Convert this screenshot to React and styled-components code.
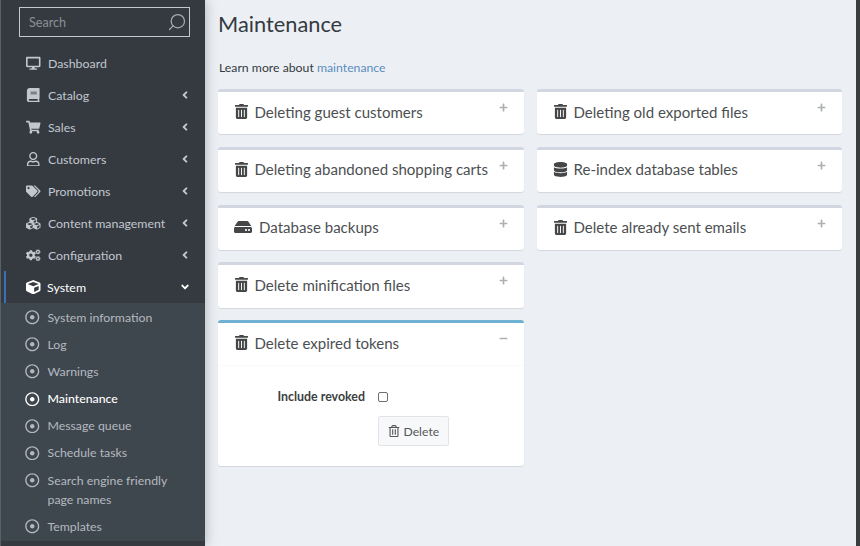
import React from 'react';
import styled, { createGlobalStyle } from 'styled-components';
import {
  FaDesktop, FaBook, FaShoppingCart, FaRegUser, FaTags, FaCubes, FaCogs, FaCube,
  FaRegDotCircle, FaTrashAlt, FaRegTrashAlt, FaDatabase, FaHdd, FaPlus, FaMinus,
  FaAngleLeft, FaAngleDown,
} from 'react-icons/fa';
import { Search } from 'lucide-react';

const GlobalStyle = createGlobalStyle`
  html, body {
    margin: 0;
    padding: 0;
    background: #ecf0f5;
  }
  * {
    box-sizing: border-box;
  }
`;

const Page = styled.div`
  display: flex;
  width: 860px;
  height: 546px;
  overflow: hidden;
  background: #ecf0f5;
  font-family: 'Lato', sans-serif;
  border-left: 1px solid #59606a;
  border-right: 4px solid #3a3d3b;
`;

const Sidebar = styled.aside`
  flex: 0 0 204px;
  height: 546px;
  overflow: hidden;
  background: #343a40;
  box-shadow: 0 0 12px rgba(0, 0, 0, 0.28);
  padding-top: 7px;
  position: relative;
  z-index: 1;
`;

const SearchBox = styled.div`
  display: flex;
  align-items: center;
  justify-content: space-between;
  height: 30px;
  margin: 0 15px 10px 18px;
  padding: 0 2px 0 9px;
  border: 1px solid #c4c9ce;
  font-size: 12.6px;
  color: #8b9197;

  svg {
    transform: scaleX(-1);
    color: #a7acb1;
  }
`;

const NavItem = styled.div`
  display: flex;
  align-items: center;
  height: 32px;
  padding: 0 14px 0 ${(p) => (p.$active ? '19px' : '24px')};
  font-size: 12.35px;
  color: ${(p) => (p.$active ? '#fff' : '#c2c7d0')};
  border-left: ${(p) => (p.$active ? '2px solid #3d6fb6' : 'none')};
  margin-left: ${(p) => (p.$active ? '3px' : '0')};
`;

const NavIcon = styled.span`
  display: flex;
  justify-content: center;
  align-items: center;
  width: 17px;
  margin-right: ${(p) => (p.$active ? '5px' : '6px')};
  font-size: 14.5px;
  flex: none;
`;

const NavLabel = styled.span`
  flex: 1;
  white-space: nowrap;
`;

const Arrow = styled.span`
  display: flex;
  font-size: 12px;
  margin-bottom: 1px;
`;

const SubNav = styled.div`
  background: #3f474e;
  padding-top: 1px;
  height: 238px;
`;

const SubItem = styled.div`
  display: flex;
  align-items: flex-start;
  padding: 3.5px 30px 3.5px 24px;
  font-size: 12.3px;
  line-height: 19px;
  height: ${(p) => (p.$tall ? '46px' : '27.2px')};
  color: ${(p) => (p.$active ? '#fff' : '#b4b9c0')};
  font-weight: ${(p) => (p.$active ? 500 : 400)};

  svg {
    flex: none;
    margin: 2.5px 8px 0 0;
    font-size: 14.5px;
  }
`;

const Main = styled.main`
  flex: 1;
  min-width: 0;
  padding: 10px 0 0 13px;
`;

const PageTitle = styled.h1`
  margin: 0;
  font-size: 21.8px;
  line-height: 28px;
  font-weight: 400;
  color: #343a40;
`;

const Learn = styled.p`
  margin: 21px 0 12px 1px;
  font-size: 12.25px;
  line-height: 18px;
  color: #343a40;

  a {
    color: #5b8dbd;
    text-decoration: none;
  }
`;

const Columns = styled.div`
  display: grid;
  grid-template-columns: 306px 305px;
  column-gap: 13px;
  align-items: start;
`;

const Column = styled.div`
  display: flex;
  flex-direction: column;
  gap: 12.6px;
`;

const Card = styled.section`
  background: #fff;
  border-top: 3px solid ${(p) => (p.$open ? '#6fb1d3' : '#d2d6e0')};
  border-radius: 3px;
  box-shadow: 0 1px 1px rgba(0, 0, 0, 0.1);
`;

const CardHeader = styled.header`
  display: flex;
  align-items: center;
  height: 42.2px;
  padding: 0 16px 3px;
  font-size: 15.05px;
  color: #4c4f52;
`;

const CardIcon = styled.span`
  display: flex;
  flex: none;
  margin-right: ${(p) => (p.$size ? 7 : 5.5)}px;
  font-size: ${(p) => p.$size || 15}px;
  color: #444648;
`;

const CardTitle = styled.span`
  flex: 1;
  white-space: nowrap;
`;

const CardTool = styled.span`
  display: flex;
  flex: none;
  align-self: flex-start;
  margin-top: 11px;
  font-size: 9px;
  color: #adb0b3;
`;

const CardBody = styled.div`
  display: grid;
  grid-template-columns: 147px auto;
  column-gap: 13px;
  row-gap: 9px;
  justify-content: start;
  align-items: center;
  padding: 21px 0 20px;
  border-top: 1px solid #fafafa;
`;

const FieldLabel = styled.label`
  text-align: right;
  font-size: 12.4px;
  font-weight: 700;
  line-height: 20px;
  color: #3c3f42;
`;

const CheckBox = styled.span`
  display: block;
  width: 10px;
  height: 10px;
  border: 1px solid #6c6f73;
  border-radius: 2px;
  background: #fff;
`;

const DeleteButton = styled.button`
  grid-column: 2;
  display: flex;
  align-items: center;
  gap: 4px;
  width: 71px;
  height: 30px;
  padding: 0 0 0 8.5px;
  background: #f7f8f9;
  border: 1px solid #e2e4e7;
  border-radius: 2px;
  font-family: inherit;
  font-size: 12.2px;
  color: #55585b;

  svg {
    font-size: 12px;
  }
`;

const menu = [
  { label: 'Dashboard', icon: FaDesktop },
  { label: 'Catalog', icon: FaBook, arrow: true },
  { label: 'Sales', icon: FaShoppingCart, arrow: true },
  { label: 'Customers', icon: FaRegUser, arrow: true },
  { label: 'Promotions', icon: FaTags, arrow: true },
  { label: 'Content management', icon: FaCubes, arrow: true },
  { label: 'Configuration', icon: FaCogs, arrow: true },
];

const subMenu = [
  { label: 'System information' },
  { label: 'Log' },
  { label: 'Warnings' },
  { label: 'Maintenance', active: true },
  { label: 'Message queue' },
  { label: 'Schedule tasks' },
  { label: 'Search engine friendly page names', tall: true },
  { label: 'Templates' },
];

const leftCards = [
  { title: 'Deleting guest customers', icon: FaTrashAlt },
  { title: 'Deleting abandoned shopping carts', icon: FaTrashAlt },
  { title: 'Database backups', icon: FaHdd, size: 18 },
  { title: 'Delete minification files', icon: FaTrashAlt },
];

const rightCards = [
  { title: 'Deleting old exported files', icon: FaTrashAlt },
  { title: 'Re-index database tables', icon: FaDatabase },
  { title: 'Delete already sent emails', icon: FaTrashAlt },
];

const ClosedCard = ({ title, icon: Icon, size }) => (
  <Card>
    <CardHeader>
      <CardIcon $size={size}><Icon /></CardIcon>
      <CardTitle>{title}</CardTitle>
      <CardTool><FaPlus /></CardTool>
    </CardHeader>
  </Card>
);

export default function App() {
  return (
    <Page>
      <GlobalStyle />
      <Sidebar>
        <SearchBox>
          Search
          <Search size={20} strokeWidth={1.5} />
        </SearchBox>
        {menu.map(({ label, icon: Icon, arrow }) => (
          <NavItem key={label}>
            <NavIcon><Icon /></NavIcon>
            <NavLabel>{label}</NavLabel>
            {arrow && <Arrow><FaAngleLeft /></Arrow>}
          </NavItem>
        ))}
        <NavItem $active>
          <NavIcon $active><FaCube /></NavIcon>
          <NavLabel>System</NavLabel>
          <Arrow><FaAngleDown /></Arrow>
        </NavItem>
        <SubNav>
          {subMenu.map((item) => (
            <SubItem key={item.label} $active={item.active} $tall={item.tall}>
              <FaRegDotCircle />
              <span>{item.label}</span>
            </SubItem>
          ))}
        </SubNav>
      </Sidebar>
      <Main>
        <PageTitle>Maintenance</PageTitle>
        <Learn>Learn more about <a href="#">maintenance</a></Learn>
        <Columns>
          <Column>
            {leftCards.map((card) => <ClosedCard key={card.title} {...card} />)}
            <Card $open>
              <CardHeader>
                <CardIcon><FaTrashAlt /></CardIcon>
                <CardTitle>Delete expired tokens</CardTitle>
                <CardTool><FaMinus /></CardTool>
              </CardHeader>
              <CardBody>
                <FieldLabel>Include revoked</FieldLabel>
                <CheckBox />
                <DeleteButton><FaRegTrashAlt /> Delete</DeleteButton>
              </CardBody>
            </Card>
          </Column>
          <Column>
            {rightCards.map((card) => <ClosedCard key={card.title} {...card} />)}
          </Column>
        </Columns>
      </Main>
    </Page>
  );
}
